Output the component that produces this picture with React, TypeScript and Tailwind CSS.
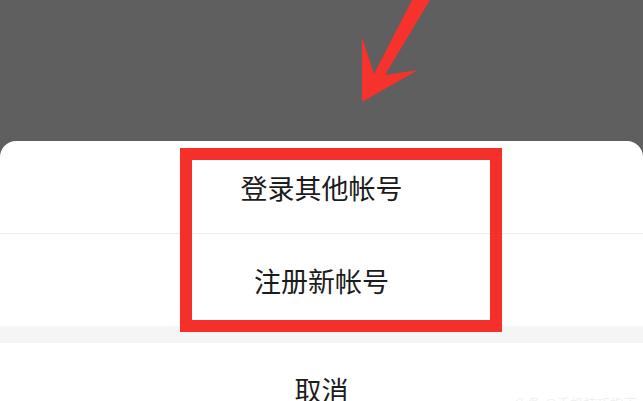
import React from 'react';

const ArrowMark: React.FC = () => (
  <svg className="absolute left-0 top-0" width="643" height="141" viewBox="0 0 643 141">
    <polygon
      points="362,102 362,37 374,74 412,0 430,0 385,75 418,70"
      fill="#f5322b"
    />
  </svg>
);

const SheetRow: React.FC<{ label: string; className?: string }> = ({ label, className }) => (
  <div className={`flex items-center justify-center ${className ?? ''}`}>
    <span className="text-[27px] leading-none text-[#1c1c1c]">{label}</span>
  </div>
);

export default function App() {
  return (
    <div
      className="relative w-[643px] h-[401px] overflow-hidden bg-[#5f5f5f] flex flex-col"
      style={{ fontFamily: '"Noto Sans CJK SC", "Noto Sans", sans-serif' }}
    >
      <div className="h-[141px] shrink-0">
        <ArrowMark />
      </div>

      <div className="flex-1 bg-white rounded-t-[16px] flex flex-col">
        <SheetRow label="登录其他帐号" className="h-[92px]" />
        <div className="h-px bg-[#ededed]" />
        <SheetRow label="注册新帐号" className="h-[92px]" />
        <div className="h-[17px] bg-[#f5f5f5]" />
        <SheetRow label="取消" className="h-[92px]" />
      </div>

      {/* red highlight box */}
      <div className="absolute left-[180px] top-[148px] w-[322px] h-[184px] border-[12px] border-[#f5302a]" />

      {/* faint watermark */}
      <div className="absolute right-[6px] top-[393px] text-[13px] text-[#f0f0f0] tracking-wide">
        头条 @手机技巧指南
      </div>
    </div>
  );
}
